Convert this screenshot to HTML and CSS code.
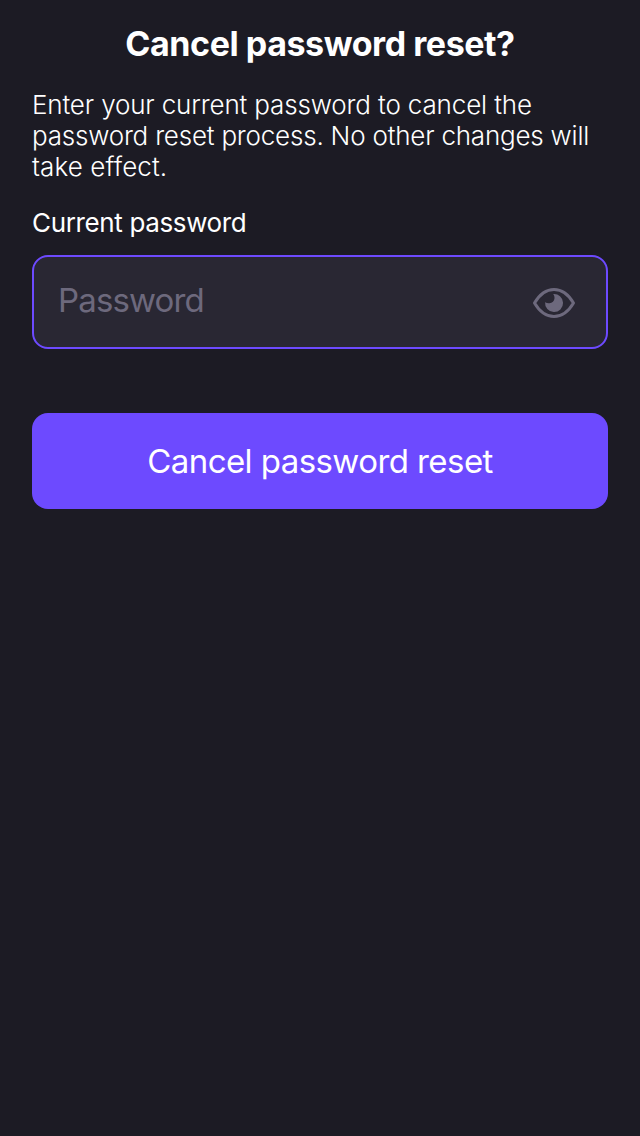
FILE: index.html
```html
<!DOCTYPE html>
<html lang="en">
<head>
<meta charset="utf-8">
<title>Cancel password reset?</title>
<link rel="stylesheet" href="styles.css">
</head>
<body>
<main class="screen">
  <h1 class="title">Cancel password reset?</h1>
  <p class="intro"><span class="line-1">Enter your current password to cancel the</span><br><span class="line-2">password reset process. No other changes will</span><br><span class="line-3">take effect.</span></p>
  <label class="label">Current password</label>
  <div class="field">
    <span class="placeholder">Password</span>
    <svg class="eye" viewBox="0 0 44 32" width="44" height="32">
      <path d="M2.500 16C7.500 7.500 13.500 2.500 22 2.500S36.500 7.500 41.500 16C36.500 24.500 30.500 29.500 22 29.500S7.500 24.500 2.500 16Z" fill="none" stroke="#6d697d" stroke-width="3" stroke-linejoin="round"/>
      <path d="M21.200 7.100A9 9 0 1 1 13.100 15.200C14.300 15.900 15.700 16.300 17.300 16.200C20.300 16 22.300 14 22.500 11.300C22.600 9.700 22.100 8.300 21.200 7.100Z" fill="#6d697d"/>
    </svg>
  </div>
  <button class="submit">Cancel password reset</button>
</main>
</body>
</html>
```
FILE: styles.css
```css
body {
  margin: 0;
  background: #1c1b24;
  color: #fff;
  font-family: Inter, sans-serif;
}
.screen {
  box-sizing: border-box;
  min-height: 1136px;
  padding: 24px 32px;
  display: flex;
  flex-direction: column;
}
.title {
  margin: 0;
  font-size: 34px;
  line-height: 40px;
  font-weight: 700;
  letter-spacing: -0.44px;
  text-align: center;
  white-space: nowrap;
}
.intro {
  margin: 25px 0 0;
  font-size: 26px;
  line-height: 31px;
  font-weight: 300;
  white-space: nowrap;
}
.line-1 {
  letter-spacing: -0.15px;
}
.line-2 {
  letter-spacing: -0.21px;
}
.line-3 {
  letter-spacing: 0.1px;
}
.label {
  margin-top: 25px;
  font-size: 26px;
  line-height: 32px;
  letter-spacing: -0.36px;
}
.field {
  box-sizing: border-box;
  height: 94px;
  margin-top: 16px;
  padding: 0 30px 0 24px;
  display: flex;
  align-items: center;
  justify-content: space-between;
  border: 2px solid #6d4aff;
  border-radius: 16px;
  background: #292733;
}
.placeholder {
  padding-bottom: 4px;
  color: #6d697d;
  font-size: 33px;
  line-height: 40px;
  letter-spacing: -0.85px;
}
.eye {
  padding-top: 2px;
}
.submit {
  height: 96px;
  margin-top: 64px;
  padding: 0;
  border: 0;
  border-radius: 16px;
  background: #6d4aff;
  color: #fff;
  font: 400 33px/40px Inter, sans-serif;
  letter-spacing: -0.57px;
}
```
